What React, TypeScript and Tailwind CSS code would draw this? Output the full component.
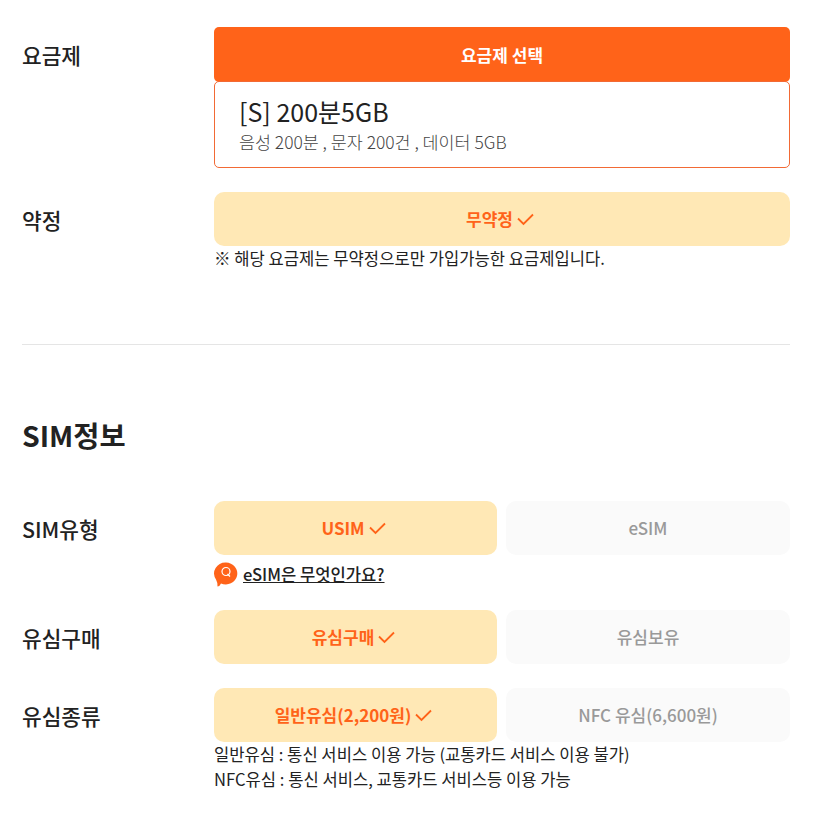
const font = { fontFamily: '"Noto Sans CJK KR", "Noto Sans", sans-serif' };

function Check() {
  return (
    <svg width="17" height="13" viewBox="0 0 17 13" fill="none" className="ml-[4px] mr-[4px] mt-[1px]">
      <path d="M1 5.5 L6.5 11 L16 1.5" stroke="#ff6319" strokeWidth="1.8" />
    </svg>
  );
}

function Option({ label, active }: { label: string; active?: boolean }) {
  if (active) {
    return (
      <div className="h-[54px] rounded-[10px] bg-[#ffe8b5] flex items-center justify-center text-[17px] font-bold text-[#ff6319]">
        {label}
        <Check />
      </div>
    );
  }
  return (
    <div className="h-[54px] rounded-[10px] bg-[#fafafa] flex items-center justify-center text-[17px] font-medium text-[#999999]">
      {label}
    </div>
  );
}

function Row({ label, className, children }: { label: string; className?: string; children: React.ReactNode }) {
  return (
    <div className={`flex ${className ?? ''}`}>
      <div className="w-[192px] h-[56px] flex items-center text-[21.4px] font-medium text-[#222222] shrink-0">{label}</div>
      <div className="w-[576px]">{children}</div>
    </div>
  );
}

export default function App() {
  return (
    <div className="w-[837px] h-[840px] bg-white pl-[22px] pt-[27px] overflow-hidden" style={font}>
      <Row label="요금제">
        <div className="h-[55px] rounded-[5px] bg-[#ff6319] flex items-center justify-center text-[17px] font-bold text-white">
          요금제 선택
        </div>
        <div className="h-[87px] -mt-px rounded-[5px] border border-[#f26a35] pl-[24px] pt-[13px]">
          <div className="text-[25px] leading-[33px] text-[#222222]">[S] 200분5GB</div>
          <div className="text-[17.4px] leading-[27px] font-light text-[#444444]">음성 200분 , 문자 200건 , 데이터 5GB</div>
        </div>
      </Row>

      <Row label="약정" className="mt-[24px]">
        <Option label="무약정" active />
        <p className="text-[16.6px] leading-[24px] text-[#222222]">※ 해당 요금제는 무약정으로만 가입가능한 요금제입니다.</p>
      </Row>

      <hr className="w-[768px] mt-[74px] border-t border-[#e5e5e5]" />

      <h2 className="mt-[68px] text-[28.4px] leading-[44px] font-bold text-[#222222]">SIM정보</h2>

      <Row label="SIM유형" className="mt-[44px]">
        <div className="grid grid-cols-[283px_1fr] gap-[9px]">
          <Option label="USIM" active />
          <Option label="eSIM" />
        </div>
        <div className="mt-[6px] h-[26px] flex items-center">
          <svg width="24" height="25" viewBox="0 0 24 25" className="mr-[5px] shrink-0">
            <path d="M12 0.5 A11.5 11 0 1 1 7 21.5 Q6 24 3.5 24.5 Q3.5 20 2 17.5 A11.5 11 0 0 1 12 0.5 Z" fill="#ff6319" />
            <circle cx="12" cy="9.5" r="4" fill="none" stroke="#ffffff" strokeWidth="1.2" />
            <path d="M13.5 12 L16 14.5" stroke="#ffffff" strokeWidth="1.2" />
          </svg>
          <a className="text-[16.6px] leading-[24px] font-medium text-[#222222] underline">eSIM은 무엇인가요?</a>
        </div>
      </Row>

      <Row label="유심구매" className="mt-[23px]">
        <div className="grid grid-cols-[283px_1fr] gap-[9px]">
          <Option label="유심구매" active />
          <Option label="유심보유" />
        </div>
      </Row>

      <Row label="유심종류" className="mt-[22px]">
        <div className="grid grid-cols-[283px_1fr] gap-[9px]">
          <Option label="일반유심(2,200원)" active />
          <Option label="NFC 유심(6,600원)" />
        </div>
        <p className="text-[16.6px] leading-[25px] text-[#222222]">일반유심 : 통신 서비스 이용 가능 (교통카드 서비스 이용 불가)</p>
        <p className="text-[16.6px] leading-[25px] text-[#222222]">NFC유심 : 통신 서비스, 교통카드 서비스등 이용 가능</p>
      </Row>
    </div>
  );
}
